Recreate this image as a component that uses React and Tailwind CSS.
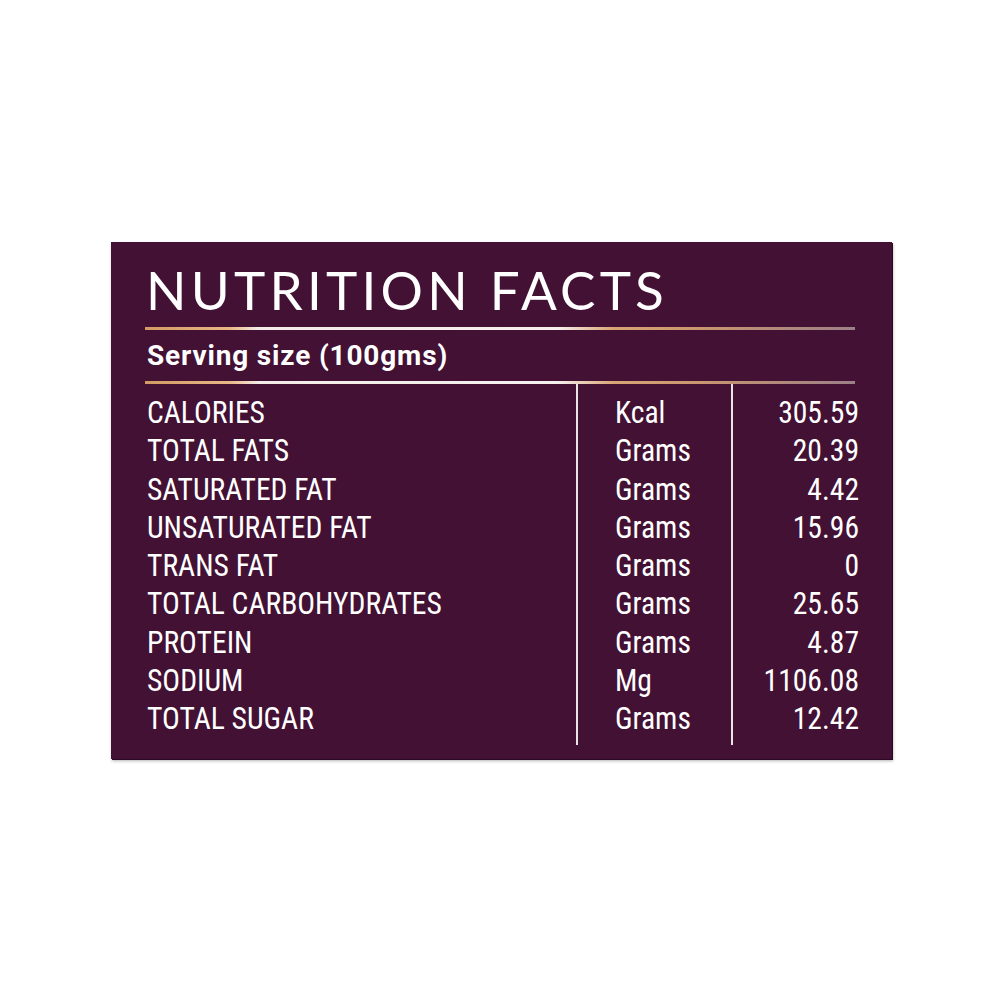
import React from "react";

const rows = [
  { name: "CALORIES", unit: "Kcal", value: "305.59" },
  { name: "TOTAL FATS", unit: "Grams", value: "20.39" },
  { name: "SATURATED FAT", unit: "Grams", value: "4.42" },
  { name: "UNSATURATED FAT", unit: "Grams", value: "15.96" },
  { name: "TRANS FAT", unit: "Grams", value: "0" },
  { name: "TOTAL CARBOHYDRATES", unit: "Grams", value: "25.65" },
  { name: "PROTEIN", unit: "Grams", value: "4.87" },
  { name: "SODIUM", unit: "Mg", value: "1106.08" },
  { name: "TOTAL SUGAR", unit: "Grams", value: "12.42" },
];

const condensed = "font-['Roboto_Condensed','Liberation_Sans_Narrow','DejaVu_Sans_Condensed',Roboto,sans-serif]";

// gold → white → gold → faded grey rule
function Rule() {
  return (
    <div className="h-[3px] w-[710px] bg-[linear-gradient(90deg,#d49a63_0%,#e8b886_12%,#f3ece8_16%,#f6f1ef_58%,#d9a474_66%,#c9966f_78%,#9c8088_100%)]" />
  );
}

export default function App() {
  return (
    <div className="min-h-[1000px] w-full bg-white pl-[111px] pt-[242px]">
      <div className="flex h-[517px] w-[781px] flex-col bg-[#421134] pl-[34px] shadow-[1px_1px_0_#2a0a22,1px_2px_3px_rgba(0,0,0,0.3)]">
        {/* Title */}
        <h1 className="mt-[22px] h-[55px] pl-[1px] font-['Lato',sans-serif] text-[53px] font-normal leading-[52px] tracking-[0.08em] text-white">
          NUTRITION FACTS
        </h1>
        <div className="mt-[8px]">
          <Rule />
        </div>
        <div className="flex h-[51px] items-center pl-[2px] font-['Roboto',sans-serif] text-[28px] font-bold tracking-[0.03em] text-white">
          Serving size (100gms)
        </div>
        <Rule />

        {/* Table */}
        <div className={`flex text-white ${condensed}`}>
          <div className="w-[431px] pl-[2px] pt-[9px]">
            {rows.map((r) => (
              <div key={r.name} className="h-[38.3px] origin-left scale-x-[0.925] whitespace-nowrap text-[32px] leading-[38px]">
                {r.name}
              </div>
            ))}
          </div>
          <div className="h-[361px] w-[2px] bg-[#ece4e4]" />
          <div className="w-[153px] pl-[37px] pt-[9px]">
            {rows.map((r) => (
              <div key={r.name} className="h-[38.3px] origin-left scale-x-[0.925] text-[32px] leading-[38px]">
                {r.unit}
              </div>
            ))}
          </div>
          <div className="h-[361px] w-[2px] bg-[#ece4e4]" />
          <div className="w-[126px] pt-[9px] text-right">
            {rows.map((r) => (
              <div key={r.name} className="h-[38.3px] origin-right scale-x-[0.925] text-[32px] leading-[38px]">
                {r.value}
              </div>
            ))}
          </div>
        </div>
      </div>
    </div>
  );
}
